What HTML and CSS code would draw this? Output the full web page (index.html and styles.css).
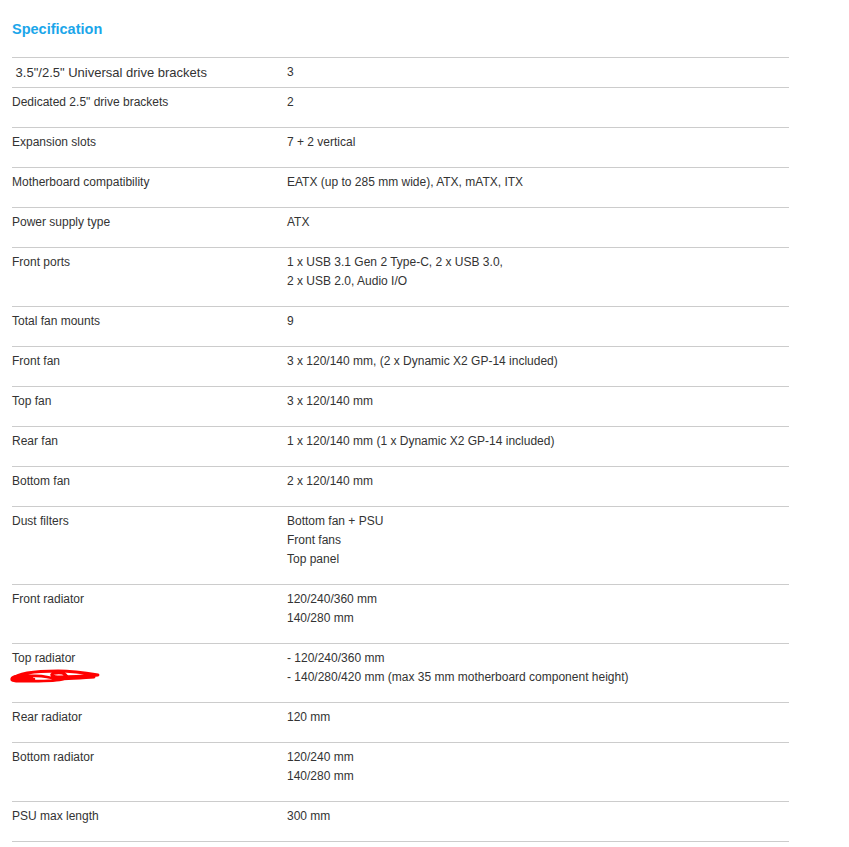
FILE: index.html
```html
<!DOCTYPE html>
<html>
<head>
    <title>Specification</title>
    <meta charset="UTF-8">
    <meta name="viewport" content="width=device-width, initial-scale=1.0">
    <link rel="stylesheet" href="styles.css">
</head>
<body>
    <div class="spec">
        <h2>Specification</h2>

        <table class="spec-table">
            <tr class="first">
                <td class="label big">&nbsp;3.5"/2.5" Universal drive brackets</td>
                <td>3</td>
            </tr>
            <tr>
                <td class="label">Dedicated 2.5" drive brackets</td>
                <td>2</td>
            </tr>
            <tr>
                <td class="label">Expansion slots</td>
                <td>7 + 2 vertical</td>
            </tr>
            <tr>
                <td class="label">Motherboard compatibility</td>
                <td>EATX (up to 285 mm wide), ATX, mATX, ITX</td>
            </tr>
            <tr>
                <td class="label">Power supply type</td>
                <td>ATX</td>
            </tr>
            <tr>
                <td class="label">Front ports</td>
                <td>1 x USB 3.1 Gen 2 Type-C, 2 x USB 3.0,<br>2 x USB 2.0, Audio I/O</td>
            </tr>
            <tr>
                <td class="label">Total fan mounts</td>
                <td>9</td>
            </tr>
            <tr>
                <td class="label">Front fan</td>
                <td>3 x 120/140 mm, (2 x Dynamic X2 GP-14 included)</td>
            </tr>
            <tr>
                <td class="label">Top fan</td>
                <td>3 x 120/140 mm</td>
            </tr>
            <tr>
                <td class="label">Rear fan</td>
                <td>1 x 120/140 mm (1 x Dynamic X2 GP-14 included)</td>
            </tr>
            <tr>
                <td class="label">Bottom fan</td>
                <td>2 x 120/140 mm</td>
            </tr>
            <tr>
                <td class="label">Dust filters</td>
                <td>Bottom fan + PSU<br>Front fans<br>Top panel</td>
            </tr>
            <tr>
                <td class="label">Front radiator</td>
                <td>120/240/360 mm<br>140/280 mm</td>
            </tr>
            <tr>
                <td class="label marked">
                    Top radiator
                    <!-- red marker scribble over the label -->
                    <svg class="scribble" width="94" height="18" viewBox="0 0 94 18">
                        <path d="M4 12 C10 6, 30 4, 50 4 C64 4, 78 6, 90 8 C78 9, 64 10, 52 10 C44 10, 40 7, 48 6 C56 5, 62 9, 56 12 C46 15, 24 14, 8 14 C2 14, 2 10, 10 9 C24 8, 36 9, 44 11 C56 13, 72 11, 86 10"
                              fill="none" stroke="#f00" stroke-width="2.8" stroke-linecap="round" stroke-linejoin="round"/>
                        <path d="M5 12 C10 10, 18 10, 24 10 M4 13 C12 13, 18 12, 26 12" fill="none" stroke="#f00" stroke-width="2.6" stroke-linecap="round"/>
                    </svg>
                </td>
                <td>- 120/240/360 mm<br>- 140/280/420 mm (max 35 mm motherboard component height)</td>
            </tr>
            <tr>
                <td class="label">Rear radiator</td>
                <td>120 mm</td>
            </tr>
            <tr>
                <td class="label">Bottom radiator</td>
                <td>120/240 mm<br>140/280 mm</td>
            </tr>
            <tr>
                <td class="label">PSU max length</td>
                <td>300 mm</td>
            </tr>
        </table>
    </div>
</body>
</html>
```

FILE: styles.css
```css
body {
    margin: 0;
    background: #ffffff;
    color: #333333;
    font-family: "Liberation Sans", Arial, sans-serif;
    font-size: 12px;
}

.spec {
    width: 777px;
    padding: 0 12px;
}

h2 {
    margin: 0;
    padding-top: 20px;
    height: 37px;
    font-size: 14.5px;
    line-height: 18px;
    font-weight: bold;
    color: #1ba6ea;
}

.spec-table {
    width: 100%;
    border-collapse: collapse;
    border-bottom: 1px solid #cccccc;
}

.spec-table td {
    border-top: 1px solid #cccccc;
    padding: 5px 0 15px 0;
    line-height: 19px;
    vertical-align: top;
}

.spec-table tr.first td {
    padding-bottom: 5px;
}

.spec-table td.label {
    width: 275px;
}

.spec-table td.big {
    font-size: 13px;
}

.marked {
    position: relative;
}

.scribble {
    position: absolute;
    left: -4px;
    top: 23px;
}
```
